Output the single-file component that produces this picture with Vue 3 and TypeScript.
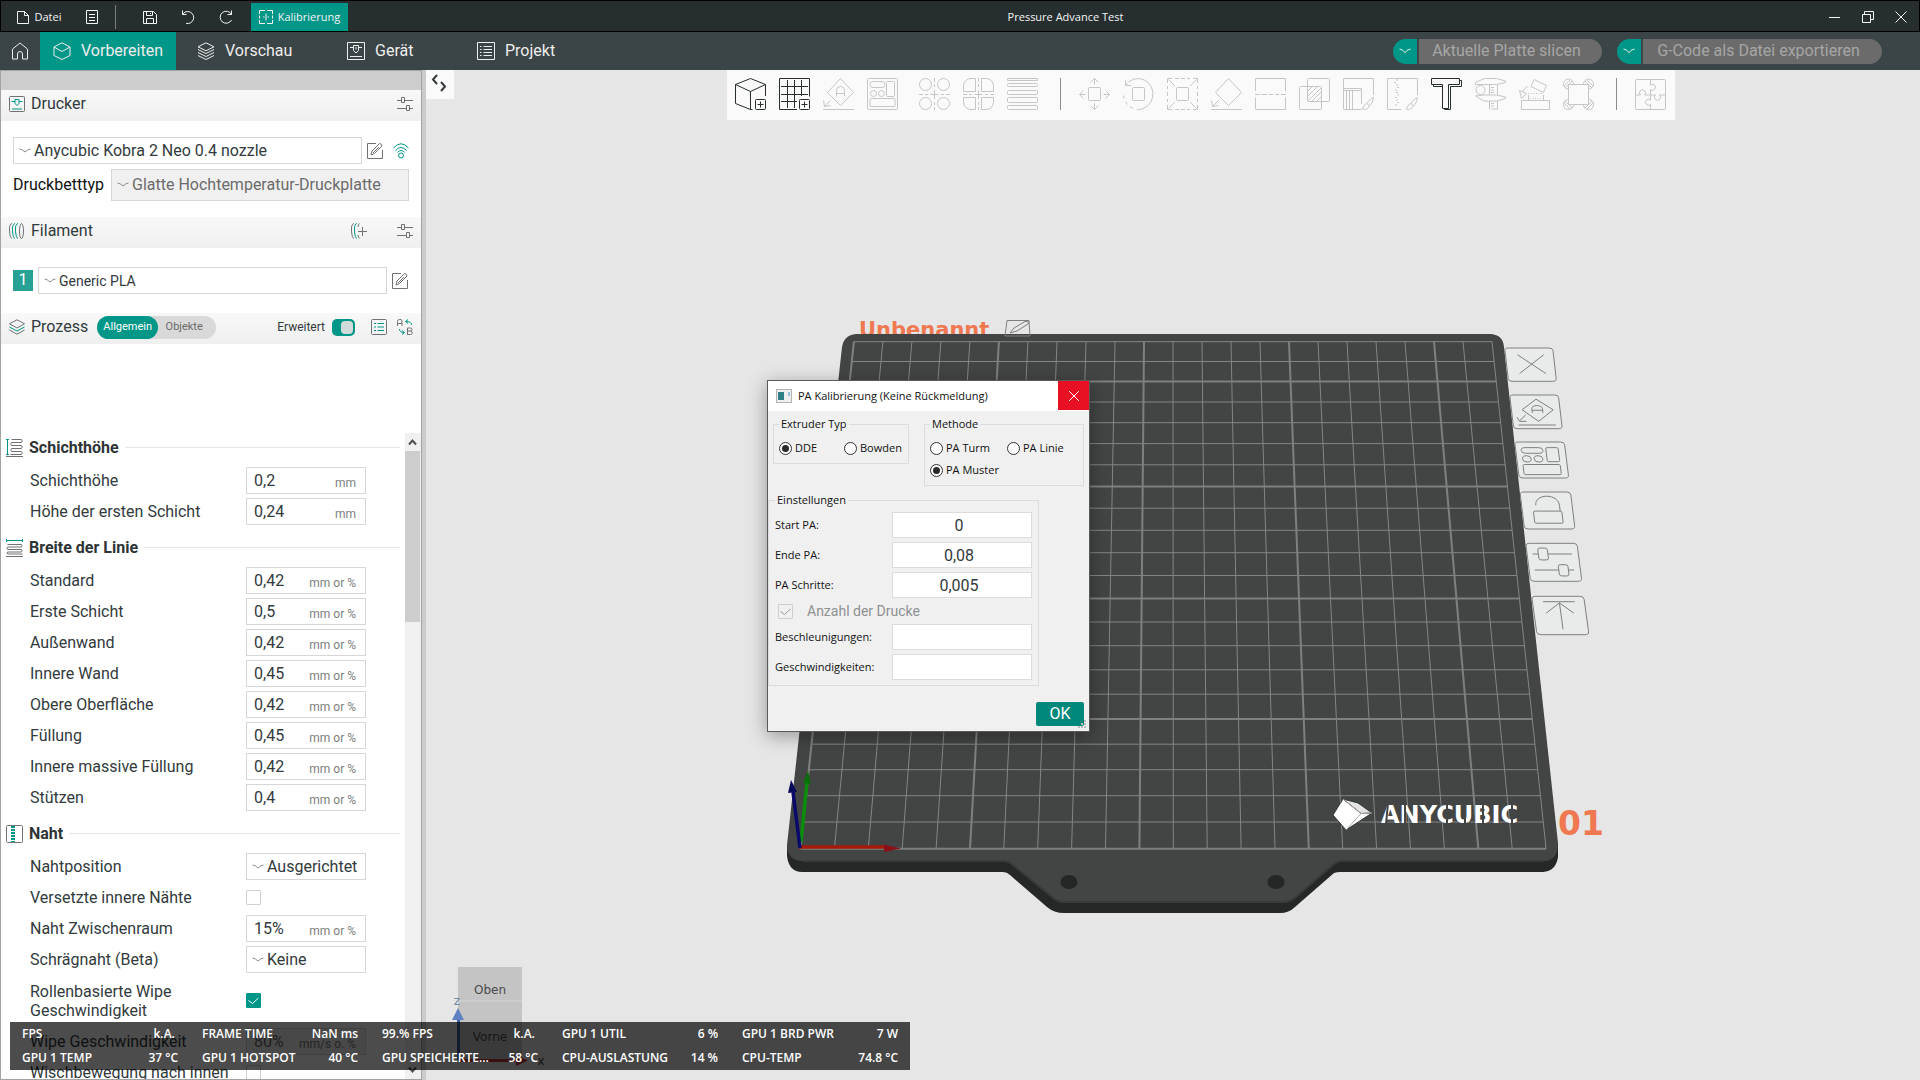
<script setup lang="ts">
import { ref } from 'vue'

interface ToolIcon {
  label: string
  d: string
  active?: boolean
}
interface Setting {
  id: string
  label: string
  kind: 'number' | 'select' | 'check'
  value?: string
  unit?: string
  checked?: boolean
  tall?: boolean
  disabled?: boolean
}
interface Section {
  title: string
  icon: 'height' | 'width' | 'seam'
  rows: Setting[]
}

const rect = (x: number, y: number, w: number, h: number, r = 0): string =>
  `M${x + r} ${y}h${w - 2 * r}a${r} ${r} 0 0 1 ${r} ${r}v${h - 2 * r}a${r} ${r} 0 0 1 ${-r} ${r}h${2 * r - w}a${r} ${r} 0 0 1 ${-r} ${-r}v${2 * r - h}a${r} ${r} 0 0 1 ${r} ${-r}z`
const circle = (cx: number, cy: number, r: number): string =>
  `M${cx - r} ${cy}a${r} ${r} 0 1 1 ${2 * r} 0a${r} ${r} 0 1 1 ${-2 * r} 0z`

const plusBox = rect(20.5, 21.5, 10, 10, 1) + 'M25.5 23.5v6M22.5 26.5h6'
const diamond = 'M17.5 .5L30.5 14.5L17.5 27.5L4.5 14.5ZM0 31.5H31M7.5 22.5L1.5 28.5M.5 22.5L1.5 28.5L7.5 27.5'
const letterMark = 'M13.5 18.5V12.5a4 4 0 0 1 8 0v6M13.5 15.5h8'
const brush = 'M30.5 19.5c-3 1-5 3.500-6.500 6l2.500 2.500c2-2 3.500-5 4-8.500zM24 25.500c-2.500 0-3 3.500-5 5.500 3.500 1 7 0 7-3.500'
const arrangeMark =
  rect(3, 3.5, 15, 6, 3) + rect(19.5, 3.5, 8, 15, 1) + circle(6.5, 15.5, 3) + circle(14.5, 15.5, 3) + rect(3, 20.5, 25, 8, 1)
const dashCross = 'M15.5 0v4M15.5 6v3M15.5 12v9M15.5 24v3M15.5 29v3M0 16.5h4M6 16.5h3M11.5 16.5h8M22 16.5h3M27 16.5h4'

const toolGroups: ToolIcon[][] = [
  [
    {
      label: 'Objekt hinzufügen',
      active: true,
      d: 'M15.5 .5L.5 6.5L15.5 13.5L30.5 6.5ZM.5 6.5V25.5L15.500 31.5V13.5M30.5 6.5V18M15.5 31.5h2' + plusBox,
    },
    {
      label: 'Platte hinzufügen',
      active: true,
      d: 'M30.5 18.5V.5H.5V31.5H18M8.5 2v28M15.5 2v28M22.5 2v16M2 8.500h27M2 16.5h27M2 23.500h16' + plusBox,
    },
    { label: 'Automatisch ausrichten', d: diamond + letterMark },
    { label: 'Anordnen', d: rect(0.5, 0.5, 30, 31, 1) + arrangeMark },
  ],
  [
    {
      label: 'In Objekte teilen',
      d: circle(6.5, 6.5, 6) + circle(24.5, 6.5, 6) + circle(6.5, 25.5, 6) + circle(24.5, 25.5, 6) + dashCross,
    },
    {
      label: 'In Teile trennen',
      d:
        'M12.5 13.500V.5H8A7.500 7.500 0 0 0 .5 8v5.500zM18.500 13.500V.5H23A7.500 7.500 0 0 1 30.5 8v5.500zM12.5 19.500V31.5H8A7.500 7.500 0 0 1 .5 24v-4.500zM18.500 19.500V31.5H23A7.500 7.500 0 0 0 30.5 24v-4.500z' +
        dashCross,
    },
    {
      label: 'Variable Schichthöhe',
      d: rect(0.5, 0.5, 30, 2) + rect(0.5, 5.5, 30, 3, 1) + rect(0.5, 12.5, 30, 4, 1) + rect(0.5, 19.5, 30, 5, 1) + rect(0.5, 27.5, 30, 4, 1),
    },
  ],
]

const gizmos: ToolIcon[] = [
  {
    label: 'Verschieben',
    d:
      rect(9.5, 9.5, 12, 13, 1) +
      'M15.500 6.5V.5M11.500 4.500L15.500 .5L19.500 4.500M6.5 16.5H.5M4.500 12.500L.5 16.5L4.500 20.500M24.500 16.5H30.5M26.500 12.500L30.5 16.5L26.500 20.500M15.500 25.500V31.5M11.500 27.500L15.500 31.5L19.500 27.500',
  },
  {
    label: 'Drehen',
    d:
      rect(9.5, 9.5, 12, 13, 1) +
      'M2.500 7.500A15 15.500 0 1 1 14 31.5M2.500 2.500V7.500H8M10 30.500L7 28.500M4.500 26.500L2.500 23.500M1 20.500L.5 17.500',
  },
  {
    label: 'Skalieren',
    d:
      rect(9.5, 9.5, 12, 13, 1) +
      'M.5 5V.5H5M8 .5h4M14 .5h4M20 .5h3M26 .5h4.500V5M.5 8v3M.5 14v4M.5 21v3M30.5 8v3M30.5 14v4M30.5 21v3M.5 27v4.500H5M8 31.5h4M14 31.5h4M20 31.5h3M26 31.5h4.500V27M1.500 1.500l6.500 6.500M29.500 1.500l-6.500 6.500M1.500 30.500l6.500-6.500M29.500 30.500l-6.500-6.500',
  },
  { label: 'Auf Fläche legen', d: diamond },
  { label: 'Schneiden', d: 'M.5 13V.5H30.5V13M.5 19.500V31.5H30.5V19.500M0 16.5h5M7 16.5h5M14 16.5h4M20 16.5h4M26 16.5h5' },
  {
    label: 'Boolesche Operation',
    d: rect(8.5, 0.5, 22, 23, 1) + rect(0.5, 8.5, 22, 23, 1) + 'M9 13l4-4M9 18l9-9M9 23l13-13M13 23l9-9M18 23l4-4',
  },
  {
    label: 'Stützen malen',
    d: 'M30.5 17V.5H.5V31.5H18M.5 10.500H18.500V26M.5 12.500H18M3.500 12.500V31M6.500 12.500V31M9.500 12.500V31' + brush,
  },
  {
    label: 'Naht malen',
    d:
      'M30.5 17V.5H.5V31.5H14M11 2h-2M9 4.500h-2M11 7h-2M12 9.500h-2M10 12h-2M11 14.500h-2M12 17h-2M10 19.500h-2M11 22h-2M12 24.500h-2M10 27h-2' +
      brush,
  },
  {
    label: 'Textform',
    active: true,
    d: 'M.5 .5H28.500V6.500H17.500V30.500H11.500V6.500H.5ZM28.500 2.500H30.5V8.500H19.500V31.500H13.500V30.500M2.500 6.500V8.500H11.500',
  },
  {
    label: 'Messen',
    d:
      'M.5 4.500L9.500 .5H21.500L30.5 3V4.500L21.500 6.500H.5ZM.5 18L9 17H21.500L30.5 19V20.500L21.500 23H9ZM14.500 6.500V17M22.500 6.500V17M14.500 23V31.500M22.500 23V31.500M16 9.500h3M16 12h3M16 14.500h3M16 25.500h3M16 28h3M16 31h6' +
      circle(5.5, 12, 4.5),
  },
  {
    label: 'SVG prägen',
    d:
      rect(2.5, 22.5, 28, 9) +
      'M15 1.500L27.500 7.500L24.500 14.500L12 8.500ZM8.500 8.500Q5 10 3.500 14M.5 12.500L7.500 15.500L2.500 20.500ZM9.500 15.500h1M12 15.500h1M14.500 15.500h1M17 15.500h1M19.500 15.500h1M22 15.500h1M9.500 17v5M24.500 17v5M11 20.500h1M13.500 20.500h1M16 20.500h1M18.500 20.500h1M21 20.500h1',
  },
  {
    label: 'Mausohren',
    d:
      rect(5.5, 6.5, 20, 20, 1) +
      'M5 11A5 5 0 1 1 10.500 6M20.500 6A5 5 0 1 1 26 11M5 21.500A5 5 0 1 0 10.500 27M20.500 27A5 5 0 1 0 26 21.500M1 8l6-6M2 10l7-7M30 8l-6-6M29 10l-7-7M1 25l6 6M2 23l7 7M30 25l-6 6M29 23l-7 7',
  },
]

const assembly: ToolIcon = {
  label: 'Montageansicht',
  d:
    rect(0.5, 1.5, 30, 30, 1) +
    'M15.500 1.500V7a3 3 0 1 1 0 4.500V22a3 3 0 1 0 0 4.500V31.5M.5 17H5.500a3 3 0 1 1 4 0H20.500a3 3 0 1 0 4 0H30.5',
}

const line = (id: string, label: string, value: string, unit = 'mm or %'): Setting => ({ id, label, kind: 'number', value, unit })

const sections = ref<Section[]>([
  {
    title: 'Schichthöhe',
    icon: 'height',
    rows: [line('layer', 'Schichthöhe', '0,2', 'mm'), line('first-layer', 'Höhe der ersten Schicht', '0,24', 'mm')],
  },
  {
    title: 'Breite der Linie',
    icon: 'width',
    rows: [
      line('w-default', 'Standard', '0,42'),
      line('w-first', 'Erste Schicht', '0,5'),
      line('w-outer', 'Außenwand', '0,42'),
      line('w-inner', 'Innere Wand', '0,45'),
      line('w-top', 'Obere Oberfläche', '0,42'),
      line('w-infill', 'Füllung', '0,45'),
      line('w-solid', 'Innere massive Füllung', '0,42'),
      line('w-support', 'Stützen', '0,4'),
    ],
  },
  {
    title: 'Naht',
    icon: 'seam',
    rows: [
      { id: 's-pos', label: 'Nahtposition', kind: 'select', value: 'Ausgerichtet' },
      { id: 's-stagger', label: 'Versetzte innere Nähte', kind: 'check', checked: false },
      line('s-gap', 'Naht Zwischenraum', '15%'),
      { id: 's-scarf', label: 'Schrägnaht (Beta)', kind: 'select', value: 'Keine' },
      { id: 's-role', label: 'Rollenbasierte Wipe Geschwindigkeit', kind: 'check', checked: true, tall: true },
      { id: 's-wipe', label: 'Wipe Geschwindigkeit', kind: 'number', value: '80%', unit: 'mm/s o. %', disabled: true },
      { id: 's-inward', label: 'Wischbewegung nach innen', kind: 'check', checked: false },
    ],
  },
])

/* Build plate: 22 x 22 cells of 10 mm seen in perspective */
const CELLS = 22
const depth = 0.00766
const project = (col: number, row: number): [number, number] => {
  const k = 1 + depth * row
  return [(800.5 + 8.97 * row + 33.89 * col) / k, (848.7 - 20.43 * row) / k]
}
const segment = (c1: number, r1: number, c2: number, r2: number): string => {
  const [x1, y1] = project(c1, r1)
  const [x2, y2] = project(c2, r2)
  return `M${x1.toFixed(1)} ${y1.toFixed(1)}L${x2.toFixed(1)} ${y2.toFixed(1)}`
}
let gridThin = ''
let gridBold = ''
for (let i = 0; i <= CELLS; i++) {
  const part = segment(i, 0, i, CELLS) + segment(0, i, CELLS, i)
  if (i % 5 === 0) gridBold += part
  else gridThin += part
}

const plateTools = [
  { label: 'Platte entfernen', m: [1504.7, 348, 48, 33.3, 3.8], d: 'M8 6.500L25.500 24.500M25.500 6.500L8 24.500' },
  { label: 'Platte ausrichten', m: [1509.7, 395, 48.6, 33.7, 4], d: 'M17 4L27.500 14L17 25L7 14ZM3.500 28.500H28M9 19L4.500 24.500M3 21L4.500 25L9 25M13.500 17V13a3.500 3 0 0 1 7 0v4M13.500 14.500h7' },
  { label: 'Platte anordnen', m: [1514.7, 442, 49.6, 36, 4.5], d: rect(3.5, 5, 14, 5, 2.5) + rect(19.5, 5, 8, 12.5, 1) + circle(6.5, 15, 2.8) + circle(14, 15, 2.8) + rect(3.5, 20, 24, 9, 1) },
  { label: 'Platte sperren', m: [1520, 492, 50.5, 37, 4.5], d: rect(7, 16.5, 18, 10.5, 1) + 'M9 11.500C9 1 24 1 24 11.500V16.500' },
  { label: 'Platteneinstellungen', m: [1525.7, 543.3, 51.3, 38, 4.9], d: 'M3.500 9H7M13 9H28' + rect(7, 4, 6, 10, 1.5) + 'M3.500 22.500H18.500M24.500 22.500H28' + rect(18.5, 18, 6, 9.5, 1.5) },
  { label: 'Nach vorn', m: [1531.7, 596.3, 52, 38.4, 5.3], d: 'M6.500 4.500H26M16.500 5.500V27.500M7.500 14L16.500 5.500L24.500 14' },
]
const matrix = (m: number[]): string => `matrix(${m[2] / 32} 0 ${m[4] / 32} ${m[3] / 32} ${m[0]} ${m[1]})`

const stats = [
  [['FPS', 'k.A. '], ['FRAME TIME', 'NaN ms'], ['99.% FPS', 'k.A. '], ['GPU 1 UTIL', '6 %'], ['GPU 1 BRD PWR', '7 W']],
  [['GPU 1 TEMP', '37 °C'], ['GPU 1 HOTSPOT', '40 °C'], ['GPU SPEICHERTE...', '58 °C'], ['CPU-AUSLASTUNG', '14 %'], ['CPU-TEMP', '74.8 °C']],
]

const extruder = ref('dde')
const method = ref('pattern')
const advanced = ref(true)
const startPa = ref('0')
const endPa = ref('0,08')
const stepPa = ref('0,005')
const accelerations = ref('')
const speeds = ref('')
</script>

<template>
  <div class="app">
    <header class="titlebar">
      <button class="tb file" type="button">
        <svg width="14" height="14" viewBox="0 0 14 14"><path d="M1.500 1.500h7l4 4v8h-11zM8.500 1.500v4h4" /></svg>
        Datei
      </button>
      <button class="tb menu" type="button" aria-label="Menü">
        <svg width="14" height="14" viewBox="0 0 14 14"><path d="M1.500 .5h11v13h-11zM4 4.500h6M4 7.500h6M4 10.500h6" /></svg>
      </button>
      <span class="tb-sep"></span>
      <button class="tb icon" type="button" aria-label="Speichern">
        <svg width="14" height="14" viewBox="0 0 14 14"><path d="M.5 1.500h10l3 3v9h-13zM3.500 1.500v4h6v-4M3.500 13.500v-5h7v5M7.500 3v1" /></svg>
      </button>
      <button class="tb icon" type="button" aria-label="Rückgängig">
        <svg width="14" height="14" viewBox="0 0 14 14"><path d="M1.500 .5v4h4M1.500 4.500A6 6 0 1 1 5 13.300" /></svg>
      </button>
      <button class="tb icon" type="button" aria-label="Wiederholen">
        <svg width="14" height="14" viewBox="0 0 14 14"><path d="M12.500 .5v4h-4M12.500 4.500A6 6 0 1 0 12.500 10" /></svg>
      </button>
      <button class="tb calib" type="button">
        <svg width="14" height="14" viewBox="0 0 14 14"><path d="M.5 4V.5H6M8 .5h5.500V4M.5 10v3.500H6M8 13.500h5.500V10M.5 5.500v3M13.500 5.500v3M4 7h1.500M8.500 7H10M7 3.500V10.500" /></svg>
        Kalibrierung
      </button>
      <h1 class="title">Pressure Advance Test</h1>
      <div class="win">
        <button type="button" aria-label="Minimieren"><svg width="12" height="12" viewBox="0 0 12 12"><path d="M0 6.500h11" /></svg></button>
        <button type="button" aria-label="Wiederherstellen"><svg width="12" height="12" viewBox="0 0 12 12"><path d="M.5 3.500h8v8h-8zM2.500 3V.5h9v8H9" /></svg></button>
        <button type="button" aria-label="Schließen"><svg width="12" height="12" viewBox="0 0 12 12"><path d="M.5 .5l11 11M11.500 .5l-11 11" /></svg></button>
      </div>
    </header>

    <nav class="tabs">
      <button class="home" type="button" aria-label="Startseite">
        <svg width="18" height="18" viewBox="0 0 18 18"><path d="M1.500 7L9 1l7.500 6v10h-5v-5a2.500 2.500 0 0 0-5 0v5h-5z" /></svg>
      </button>
      <button class="tab on" type="button">
        <svg width="18" height="18" viewBox="0 0 18 18"><path d="M9 .8l8 4.200v8.500L9 17.500 1 13.500V5zM1 5l8 4.500L17 5" /></svg>
        Vorbereiten
      </button>
      <button class="tab preview" type="button">
        <svg width="18" height="18" viewBox="0 0 18 18"><path d="M9 .8l8 4-8 4-8-4zM1 7.500l8 4 8-4M1 10.500l8 4 8-4M1 13.500l8 4 8-4" /></svg>
        Vorschau
      </button>
      <button class="tab device" type="button">
        <svg width="18" height="18" viewBox="0 0 18 18"><path d="M.5 .5h17v17H.5zM3 5.500h3.500M11.500 5.500H15M6.500 3.500h5v5L9 11 6.500 8.500zM9 5v2.500M3 14.500h12" /></svg>
        Gerät
      </button>
      <button class="tab" type="button">
        <svg width="18" height="18" viewBox="0 0 18 18"><path d="M.5 .5h17v17H.5zM3 4.500h1.500M3 7.500h1.500M3 10.500h1.500M3 13.500h1.500M6.500 4.500H15M6.500 7.500H15M6.500 10.500H15M6.500 13.500H15" /></svg>
        Projekt
      </button>
      <div class="actions">
        <div class="split">
          <button class="caret" type="button" aria-label="Slice-Optionen"><svg width="12" height="6" viewBox="0 0 12 6"><path d="M.5 1q2.500 0 5.500 3.500Q9 1 11.500 1" /></svg></button>
          <button class="go" type="button" disabled>Aktuelle Platte slicen</button>
        </div>
        <div class="split wide">
          <button class="caret" type="button" aria-label="Export-Optionen"><svg width="12" height="6" viewBox="0 0 12 6"><path d="M.5 1q2.500 0 5.500 3.500Q9 1 11.500 1" /></svg></button>
          <button class="go" type="button" disabled>G-Code als Datei exportieren</button>
        </div>
      </div>
    </nav>

    <div class="work">
      <aside class="side">
        <div class="band"></div>
        <section>
          <h2 class="head">
            <svg class="hi" width="16" height="16" viewBox="0 0 16 16"><rect x=".5" y=".5" width="15" height="15" rx="1" /><path class="t" d="M2.500 5.500H6M10 5.500h3.500M6 3.500h4v4L8 9.500 6 7.500zM3 13h10" /></svg>
            Drucker
            <button class="ib push" type="button" aria-label="Druckereinstellungen">
              <svg width="16" height="16" viewBox="0 0 16 16"><path d="M0 4.500h4M7 4.500h9M4.500 1.500h3v5h-3zM0 12.500h9.500M13 12.500h3M9.500 9.500h3v5h-3z" /></svg>
            </button>
          </h2>
          <div class="row printer">
            <div class="sel">
              <svg class="chev" width="12" height="6" viewBox="0 0 12 6"><path d="M.5 1q2.500 0 5.500 3Q9 1 11.500 1" /></svg>
              <select aria-label="Drucker"><option>Anycubic Kobra 2 Neo 0.4 nozzle</option></select>
            </div>
            <button class="ib" type="button" aria-label="Drucker bearbeiten">
              <svg width="16" height="16" viewBox="0 0 16 16"><path d="M9 .5H.5v15h15V7M4 12l1-4 7.500-7.500q2 0 2.500 2.500L7.500 10.500zM6 10l6-6" /></svg>
            </button>
            <button class="ib wifi" type="button" aria-label="Netzwerk">
              <svg width="16" height="16" viewBox="0 0 16 16"><path class="t" d="M.5 5Q8-3.500 15.500 5M2.500 7.500Q8 1.500 13.500 7.500M4.500 9.500Q8 5.500 11.500 9.500" /><circle class="t" cx="8" cy="12.500" r="2.500" /></svg>
            </button>
          </div>
          <div class="row bed">
            <label for="bed">Druckbetttyp</label>
            <div class="sel off">
              <svg class="chev" width="12" height="6" viewBox="0 0 12 6"><path d="M.5 1q2.500 0 5.500 3Q9 1 11.500 1" /></svg>
              <select id="bed" disabled><option>Glatte Hochtemperatur-Druckplatte</option></select>
            </div>
          </div>
        </section>
        <section>
          <h2 class="head">
            <svg class="hi" width="16" height="16" viewBox="0 0 16 16"><path d="M3 .5Q0 1 .5 8T3 15.500" /><path class="t" d="M6 .5Q3 1 3.500 8T6 15.500M9 .5Q6 1 6.500 8T9 15.500" /><ellipse cx="12.500" cy="8" rx="2" ry="7.500" /></svg>
            Filament
            <button class="ib push" type="button" aria-label="Filament hinzufügen">
              <svg width="16" height="16" viewBox="0 0 16 16"><path d="M3 .5Q0 1 .5 8T3 15.500M8.500 .5Q7.500 1 7 4M7 12Q7.500 15 8.500 15.500M7 8.500h9M11.500 4v9" /><path class="t" d="M6 .5Q3 1 3.500 8T6 15.500" /></svg>
            </button>
            <button class="ib far" type="button" aria-label="Filamenteinstellungen">
              <svg width="16" height="16" viewBox="0 0 16 16"><path d="M0 4.500h4M7 4.500h9M4.500 1.500h3v5h-3zM0 12.500h9.500M13 12.500h3M9.500 9.500h3v5h-3z" /></svg>
            </button>
          </h2>
          <div class="row filament">
            <span class="slot">1</span>
            <div class="sel small">
              <svg class="chev" width="12" height="6" viewBox="0 0 12 6"><path d="M.5 1q2.500 0 5.500 3Q9 1 11.500 1" /></svg>
              <select aria-label="Filament"><option>Generic PLA</option></select>
            </div>
            <button class="ib" type="button" aria-label="Filament bearbeiten">
              <svg width="16" height="16" viewBox="0 0 16 16"><path d="M9 .5H.5v15h15V7M4 12l1-4 7.500-7.500q2 0 2.500 2.500L7.500 10.500zM6 10l6-6" /></svg>
            </button>
          </div>
        </section>
        <section class="process">
          <h2 class="head">
            <svg class="hi" width="16" height="16" viewBox="0 0 16 16"><path d="M8 .8l7.500 4L8 9 .5 4.800zM.5 11l7.500 4.200 7.500-4.200" /><path class="t" d="M.5 8L8 12l7.500-4" /></svg>
            Prozess
            <span class="pill"><button class="act" type="button">Allgemein</button><button type="button">Objekte</button></span>
            <label class="adv" for="adv">Erweitert</label>
            <input id="adv" v-model="advanced" class="toggle" type="checkbox" role="switch" />
            <button class="ib gap" type="button" aria-label="Profile">
              <svg width="16" height="16" viewBox="0 0 16 16"><rect x=".5" y=".5" width="15" height="15" rx="1" /><path class="t" d="M3 4.500h2M3 8h2M3 11.500h2M6.500 4.500H13M6.500 8H13M6.500 11.500H13" /></svg>
            </button>
            <button class="ib gap2" type="button" aria-label="Vergleichen">
              <svg width="16" height="16" viewBox="0 0 16 16"><path d="M.5 7V2.500a2 2 0 0 1 4.500 0V7M.5 4.500H5M10.500 9v6.500h3a1.500 1.500 0 0 0 0-3.500 1.500 1.500 0 0 0 0-3zM10.500 12h3" /><path class="t" d="M14.500 6q0-3.500-5.500-3.500M11 .5l-2.500 2L11 4.500M2.500 10q0 3.500 4.500 3.500M5 11.500l2.500 2-2.500 2" /></svg>
            </button>
          </h2>
        </section>
        <div class="scroll">
          <div class="list">
            <section v-for="s in sections" :key="s.title">
              <h3 class="sec">
                <svg width="17" height="18" viewBox="0 0 17 18">
                  <template v-if="s.icon === 'height'">
                    <path class="t" d="M0 .5h3M1.500 .5v15M0 15.500h3" /><path d="M5.500 .5h10q1.500 1.500 0 3h-10q-1.500 1.500 0 3h10q1.500 1.500 0 3h-10q-1.500 1.500 0 3h10q1.500 1.500 0 3h-11M0 17.500h17" />
                  </template>
                  <template v-else-if="s.icon === 'width'">
                    <path class="t" d="M.5 0v3M.5 1.500h16M16.500 0v3" /><path d="M1.500 5.500h14q1 1.250 0 2.500h-14q-1 1.250 0 2.500h14q1 1.250 0 2.500h-14q-1 1 0 2h15M0 17.500h17" />
                  </template>
                  <template v-else>
                    <rect x=".5" y=".5" width="16" height="17" rx="1" /><path class="seam" d="M7 1v16" />
                  </template>
                </svg>
                {{ s.title }}
                <span class="rule"></span>
              </h3>
              <div v-for="r in s.rows" :key="r.id" class="set" :class="{ tall: r.tall, dim: r.disabled }">
                <label :for="r.id">{{ r.label }}</label>
                <div v-if="r.kind === 'number'" class="num">
                  <input :id="r.id" v-model="r.value" type="text" :disabled="r.disabled" /><span>{{ r.unit }}</span>
                </div>
                <div v-else-if="r.kind === 'select'" class="sel opt">
                  <svg class="chev" width="12" height="6" viewBox="0 0 12 6"><path d="M.5 1q2.500 0 5.500 3Q9 1 11.500 1" /></svg>
                  <select :id="r.id"><option>{{ r.value }}</option></select>
                </div>
                <span v-else class="box">
                  <input :id="r.id" v-model="r.checked" type="checkbox" />
                  <svg v-if="r.checked" width="15" height="15" viewBox="0 0 15 15"><path d="M2.500 7.500l4 3 6-5.500" /></svg>
                </span>
              </div>
            </section>
          </div>
          <div class="bar">
            <svg width="15" height="18" viewBox="0 0 15 18"><path d="M4 11.500l3.500-4 3.500 4" /></svg>
            <div class="track"><div class="thumb"></div></div>
            <svg width="15" height="18" viewBox="0 0 15 18"><path d="M4 6.500l3.500 4 3.500-4" /></svg>
          </div>
        </div>
      </aside>

      <main class="view">
        <svg class="scene" viewBox="426 70 1494 1010" preserveAspectRatio="xMinYMin meet" role="img" aria-label="Druckplatte">
          <text class="orange" x="859" y="337" font-size="21">Unbenannt</text>
          <path class="side3d" d="M787 845V856Q789 872 802 872H1003Q1007 872 1010 875L1047 907Q1054 913 1064 913H1280Q1289 913 1295 907L1334 873Q1337 872 1340 872H1543Q1556 871 1558 857V843Z" />
          <path class="top3d" d="M856 334H1491Q1503 335 1504 347L1558 843Q1558 861 1543 861H1342Q1337 861 1334 864L1297 896Q1291 902 1284 902H1064Q1057 902 1051 896L1013 865Q1008 861 1004 861H802Q787 860 787 845L842 347Q844 335 856 334Z" />
          <path class="edge3d" d="M802 861H1004Q1008 861 1013 865L1051 896Q1057 902 1064 902H1284Q1291 902 1297 896L1334 864Q1337 861 1342 861H1543" />
          <ellipse cx="1069" cy="882" rx="8.500" ry="7" class="hole" />
          <ellipse cx="1276" cy="882" rx="8.500" ry="7" class="hole" />
          <path :d="gridThin" class="thin" />
          <path :d="gridBold" class="bold" />
          <path d="M1343 799L1333 815L1346 830L1372 813L1358 803Z" fill="#fff" />
          <path d="M1343 799L1361 813.500L1372 813L1358 803Z" fill="#e4e4e4" />
          <path d="M1343 799L1361 813.500L1346 830M1361 813.500L1372 813" stroke="#a8a8a8" fill="none" />
          <text class="brand" x="1381" y="823" font-size="24">ANYCUBIC</text>
          <path class="cuts" d="M1388 803L1386 824M1405 803V824M1447 803V824M1465 803V824M1483 803V824M1512 803V824" />
          <text class="orange" x="1558" y="835" font-size="33">01</text>
          <g class="axes">
            <path d="M799 847H885" stroke="#a51b08" stroke-width="3.500" /><path d="M884 844.500L901 848.500L884 852Z" fill="#8a1018" />
            <path d="M801 842L807 782" stroke="#0c8c0c" stroke-width="3.500" /><path d="M803 783L808 771L811 784Z" fill="#0a6e0a" />
            <path d="M800 848L793 792" stroke="#0a0a6a" stroke-width="3.500" /><path d="M788 793L791 780L797 792Z" fill="#0a0a5a" />
          </g>
          <g class="ptool">
            <path d="M1007 320.500H1029L1030 336H1005ZM1010 333L1014 328L1025 321.500Q1030 321 1028 324L1017 331Z" />
            <g v-for="p in plateTools" :key="p.label" role="button" :aria-label="p.label" :transform="matrix(p.m)">
              <rect x="0" y="0" width="32" height="32" rx="2.500" /><path :d="p.d" />
            </g>
          </g>
          <g class="cube">
            <path d="M458 967H522V1061H458Z" fill="#c4c4c4" />
            <path d="M458 1001H522" stroke="#d6d6d6" />
            <text x="490" y="994" text-anchor="middle">Oben</text>
            <text x="490" y="1041" text-anchor="middle">Vorne</text>
            <path d="M458.500 1018V1060" stroke="#3f62a8" stroke-width="3" /><path d="M452 1020L458 1008L464 1020Z" fill="#5f82c4" />
            <path d="M459 1060.500H520" stroke="#c23b3b" stroke-width="3" /><path d="M516 1055L528 1060.500L516 1066Z" fill="#c23b3b" />
            <text x="457" y="1005" text-anchor="middle" class="z">z</text>
            <text x="541" y="1065" text-anchor="middle">x</text>
          </g>
        </svg>
        <button class="fold" type="button" aria-label="Seitenleiste einklappen">
          <svg width="16" height="18" viewBox="0 0 16 18"><path d="M6 1L2 5.500 6 10M10 8l4 4.500L10 17" /></svg>
        </button>
        <div class="tools" role="toolbar" aria-label="Werkzeuge">
          <template v-for="(g, i) in toolGroups" :key="i">
            <button v-for="(t, j) in g" :key="t.label" type="button" :aria-label="t.label" :class="{ live: t.active, split2: i > 0 && j === 0 }">
              <svg width="32" height="32" viewBox="0 0 32 32"><path :d="t.d" /></svg>
            </button>
          </template>
          <span class="vsep"></span>
          <button v-for="t in gizmos" :key="t.label" type="button" :aria-label="t.label" :class="{ live: t.active }">
            <svg width="32" height="32" viewBox="0 0 32 32"><path :d="t.d" /></svg>
          </button>
          <span class="vsep"></span>
          <button type="button" :aria-label="assembly.label"><svg width="32" height="32" viewBox="0 0 32 32"><path :d="assembly.d" /></svg></button>
        </div>
      </main>
    </div>

    <form class="dialog" role="dialog" aria-labelledby="dlg" @submit.prevent>
      <header>
        <svg width="16" height="14" viewBox="0 0 16 14" stroke-width="0"><rect width="16" height="14" fill="#b4b4b4" /><rect x="1" y="1" width="14" height="12" fill="#eee" /><rect x="2" y="3" width="6" height="8" fill="#2f7f86" /><rect x="12" y="3" width="2" height="4" fill="#9ac0dc" /></svg>
        <h2 id="dlg">PA Kalibrierung (Keine Rückmeldung)</h2>
        <button class="x" type="button" aria-label="Dialog schließen"><svg width="12" height="12" viewBox="0 0 12 12"><path d="M1 1l10 10M11 1L1 11" /></svg></button>
      </header>
      <div class="groups">
        <fieldset class="ext">
          <legend>Extruder Typ</legend>
          <label class="first"><input v-model="extruder" type="radio" name="ext" value="dde" />DDE</label>
          <label><input v-model="extruder" type="radio" name="ext" value="bowden" />Bowden</label>
        </fieldset>
        <fieldset class="met">
          <legend>Methode</legend>
          <label class="first"><input v-model="method" type="radio" name="met" value="tower" />PA Turm</label>
          <label><input v-model="method" type="radio" name="met" value="line" />PA Linie</label>
          <label><input v-model="method" type="radio" name="met" value="pattern" />PA Muster</label>
        </fieldset>
      </div>
      <fieldset class="cfg">
        <legend>Einstellungen</legend>
        <div class="f"><label for="pa0">Start PA:</label><input id="pa0" v-model="startPa" type="text" /></div>
        <div class="f"><label for="pa1">Ende PA:</label><input id="pa1" v-model="endPa" type="text" /></div>
        <div class="f"><label for="pas">PA Schritte:</label><input id="pas" v-model="stepPa" type="text" /></div>
        <label class="cnt">
          <span class="box"><input type="checkbox" checked disabled /><svg width="15" height="15" viewBox="0 0 15 15"><path d="M2.500 7.500l4 3 6-5.500" /></svg></span>
          Anzahl der Drucke
        </label>
        <div class="f"><label for="acc">Beschleunigungen:</label><input id="acc" v-model="accelerations" type="text" /></div>
        <div class="f"><label for="spd">Geschwindigkeiten:</label><input id="spd" v-model="speeds" type="text" /></div>
      </fieldset>
      <footer><button type="submit">OK</button></footer>
      <svg class="grip" width="9" height="9" viewBox="0 0 9 9"><path d="M6 0h2v2H6zM3 3h2v2H3zM6 3h2v2H6zM0 6h2v2H0zM3 6h2v2H3zM6 6h2v2H6z" /></svg>
    </form>

    <div class="osd">
      <div v-for="(r, i) in stats" :key="i" class="osd-row">
        <div v-for="c in r" :key="c[0]" class="cell"><span>{{ c[0] }}</span><span>{{ c[1] }}</span></div>
      </div>
    </div>
  </div>
</template>

<style>
html,
body {
  margin: 0;
  height: 100%;
  overflow: hidden;
}
</style>

<style scoped>
.app {
  position: relative;
  display: flex;
  flex-direction: column;
  height: 100vh;
  font: 16px/20px Roboto, "Noto Sans", sans-serif;
  color: #323a3d;
  background: #e6e6e6;
  overflow: hidden;
}
*,
*::before {
  box-sizing: border-box;
}
button,
input,
select {
  font: inherit;
  color: inherit;
  margin: 0;
  padding: 0;
  border: 0;
  background: none;
  border-radius: 0;
}
h1,
h2,
h3 {
  margin: 0;
  font: inherit;
}
svg {
  display: block;
  flex: none;
  fill: none;
  stroke: currentColor;
}

/* title bar */
.titlebar {
  display: flex;
  align-items: center;
  height: 32px;
  flex: none;
  padding: 1px 2px 0 1px;
  border: 1px solid #000;
  background: #262e30;
  color: #f4f4f4;
  font: 11px/16px "Open Sans", "Noto Sans", sans-serif;
}
.tb {
  display: flex;
  align-items: center;
  justify-content: center;
  height: 28px;
  gap: 5px;
}
.file { width: 73px; }
.menu { width: 34px; }
.tb-sep {
  width: 1px;
  height: 24px;
  margin: 0 15px 0 6px;
  background: #7d7d7d;
}
.icon { width: 38px; }
.calib {
  width: 97px;
  margin-left: 6px;
  background: #009688;
}
.title {
  flex: 1;
  text-align: center;
}
.win {
  display: flex;
  justify-content: flex-end;
  width: 134px;
}
.win button {
  display: flex;
  justify-content: center;
  align-items: center;
  width: 33px;
  height: 28px;
}

/* main tabs */
.tabs {
  display: flex;
  height: 38px;
  flex: none;
  background: #3b4446;
  color: #eee;
}
.home {
  width: 40px;
  display: flex;
  align-items: center;
  justify-content: center;
}
.tab {
  display: flex;
  align-items: center;
  gap: 10px;
  padding: 0 21px;
}
.tab.on {
  width: 136px;
  padding: 0 13px;
  background: #009688;
}
.preview { width: 150px; }
.device { width: 130px; }
.actions {
  display: flex;
  align-items: center;
  gap: 15px;
  margin-left: auto;
  padding-right: 38px;
}
.split {
  display: flex;
  gap: 2px;
  height: 25px;
}
.caret {
  display: flex;
  align-items: center;
  justify-content: center;
  width: 24px;
  border-radius: 13px 0 0 13px;
  background: #009688;
}
.go {
  width: 183px;
  padding-right: 8px;
  border-radius: 0 13px 13px 0;
  background: #6b6b6b;
  color: #a6a6a6;
}
.wide .go { width: 239px; }

.work {
  flex: 1;
  display: flex;
  min-height: 0;
}

/* sidebar */
.side {
  display: flex;
  flex-direction: column;
  width: 422px;
  flex: none;
  border: 1px solid #a3a3a3;
  background: #fff;
}
.band {
  height: 19px;
  flex: none;
  background: #cdcdcd;
}
.head {
  display: flex;
  align-items: center;
  height: 31px;
  padding: 0 8px 3px;
  background: linear-gradient(#f8f8f8, #efefef);
}
.hi { margin-right: 6px; }
.hi,
.ib { color: #6f7274; }
.t { stroke: #009688; }
.push { margin-left: auto; }
.far { margin-left: 30px; }
.row {
  display: flex;
  align-items: center;
}
.printer {
  gap: 5px;
  padding: 16px 12px 5px;
}
.wifi { margin-left: 5px; }
.bed {
  gap: 8px;
  padding: 0 12px 16px;
  color: #111;
}
.bed label { flex: none; width: 90px; }
.sel {
  flex: 1;
  display: flex;
  align-items: center;
  height: 27px;
  padding-left: 5px;
  border: 1px solid #d6d6d6;
  background: #fff;
}
.sel select {
  flex: 1;
  min-width: 0;
  height: 100%;
  padding-left: 3px;
  appearance: none;
  opacity: 1;
}
.chev { color: #8b8b8b; }
.off {
  height: 32px;
  background: #f0f0f0;
  color: #6b6b6b;
}
.small { font-size: 14px; }
.filament {
  gap: 5px;
  padding: 19px 13px 19px 12px;
}
.slot {
  width: 20px;
  height: 21px;
  text-align: center;
  background: #27a294;
  color: #fff;
}
.pill {
  display: flex;
  height: 23px;
  margin-left: 9px;
  border-radius: 12px;
  background: #d9d9d9;
  font-size: 11px;
}
.pill button {
  width: 58px;
  padding-right: 6px;
  color: #6b6b6b;
}
.pill .act {
  width: 61px;
  padding: 0;
  border-radius: 12px;
  background: #009688;
  color: #fff;
}
.adv {
  margin-left: auto;
  font-size: 12px;
}
.toggle {
  appearance: none;
  width: 23px;
  height: 17px;
  margin-left: 7px;
  border-radius: 5px;
  background: #009688;
  display: flex;
  align-items: center;
  justify-content: flex-end;
  padding-right: 2px;
}
.toggle::before {
  content: "";
  width: 12px;
  height: 13px;
  border-radius: 4px;
  background: #d2dcda;
}
.gap { margin-left: 16px; }
.gap2 { margin-left: 10px; }

.scroll {
  flex: 1;
  display: flex;
  min-height: 0;
  padding-top: 83px;
}
.list {
  flex: 1;
  overflow: hidden;
}
.sec {
  display: flex;
  align-items: center;
  height: 38px;
  padding: 3px 5px 0;
  gap: 6px;
  font-weight: 700;
  color: #2e3436;
}
.sec svg { color: #6f7274; }
.sec .seam {
  stroke: #009688;
  stroke-width: 4;
  stroke-dasharray: 2 1;
}
.rule {
  flex: 1;
  height: 1px;
  background: #e6e6e6;
}
.set {
  display: flex;
  align-items: center;
  height: 31px;
  padding-left: 29px;
}
.set > label {
  width: 216px;
  padding-right: 16px;
}
.tall {
  height: 51px;
  line-height: 19px;
}
.tall > label { padding-right: 50px; }
.num {
  display: flex;
  align-items: center;
  width: 120px;
  height: 27px;
  padding: 0 9px 0 7px;
  border: 1px solid #d6d6d6;
  background: #fff;
}
.num input {
  flex: 1;
  min-width: 0;
  width: 30px;
  height: 100%;
}
.num span {
  padding-top: 4px;
  font-size: 12px;
  line-height: 16px;
  color: #7c7f7e;
}
.opt {
  flex: none;
  width: 120px;
}
.dim .num { background: #f0f0f0; }
.dim input { color: #6b6b6b; }
.box {
  display: grid;
  width: 15px;
  height: 15px;
}
.box > * { grid-area: 1 / 1; }
.box input {
  appearance: none;
  width: 15px;
  height: 15px;
  border: 1px solid #cfcfcf;
  border-radius: 1px;
}
.set .box input:checked {
  border-color: #009688;
  background: #009688;
}
.box svg {
  color: #fff;
  pointer-events: none;
}
.bar {
  display: flex;
  flex-direction: column;
  width: 16px;
  margin-top: 6px;
  background: #f0f0f0;
  color: #505050;
}
.bar svg { stroke-width: 2; }
.track { flex: 1; }
.thumb {
  height: 28%;
  width: 15px;
  background: #cdcdcd;
}

/* viewport */
.view {
  position: relative;
  flex: 1;
  min-width: 0;
  border-left: 4px solid #cbcbcb;
}
.scene {
  width: 100%;
  height: 100%;
}
.scene text {
  stroke: none;
  font-family: "DejaVu Sans", sans-serif;
}
.scene .orange {
  fill: #f07850;
  font-weight: 700;
}
.scene .brand {
  fill: #fff;
  font-weight: 700;
}
.cuts { stroke: #434544; stroke-width: 2; }
.side3d { fill: #262828; stroke: none; }
.top3d { fill: #434544; stroke: none; }
.edge3d { stroke: #383b3a; stroke-width: 2; }
.hole { fill: #252726; stroke: none; }
.thin { stroke: #848685; }
.bold { stroke: #7e807f; stroke-width: 2; }
.axes path[fill] { stroke: none; }
.ptool {
  stroke: #7e8080;
}
.ptool path,
.ptool rect { vector-effect: non-scaling-stroke; }
.ptool rect { fill: #e9ebea; }
.cube text {
  fill: #4a4a4a;
  font-size: 12px;
}
.cube path:not([stroke]) { stroke: none; }
.cube .z { fill: #6f87a8; }
.fold {
  position: absolute;
  left: 0;
  top: 0;
  width: 28px;
  height: 29px;
  padding: 4px 0 0 5px;
  background: #fafafa;
  display: flex;
}
.fold svg { stroke-width: 2; }
.tools {
  position: absolute;
  left: 301px;
  top: 0;
  display: flex;
  gap: 12px;
  height: 50px;
  padding: 8px;
  background: #fafafa;
}
.tools button {
  display: flex;
  color: #c6c6c6;
}
.tools .live { color: #262e30; }
.tools .split2 { margin-left: 8px; }
.vsep {
  width: 1px;
  height: 32px;
  margin: 0 6px 0 9px;
  background: #8c8c8c;
}

/* calibration dialog */
.dialog {
  position: absolute;
  left: 767px;
  top: 380px;
  width: 323px;
  border: 1px solid #5a5a5a;
  background: #f0f0f0;
  box-shadow: 0 4px 18px rgba(0, 0, 0, 0.35);
  font: 11px/16px "Open Sans", "Noto Sans", sans-serif;
  color: #111;
}
.dialog header {
  display: flex;
  align-items: center;
  height: 30px;
  padding-left: 8px;
  gap: 6px;
  background: #fff;
}
.dialog .x {
  display: flex;
  align-items: center;
  justify-content: center;
  align-self: flex-start;
  width: 31px;
  height: 29px;
  margin-left: auto;
  background: #e81123;
  color: #fff;
}
.groups {
  display: flex;
  align-items: flex-start;
  justify-content: space-between;
  padding: 5px 5px 0;
}
fieldset {
  margin: 0;
  min-width: 0;
  border: 1px solid #dcdcdc;
}
legend {
  padding: 0 2px;
}
.ext,
.met {
  display: flex;
  padding: 5px 4px 4px 5px;
}
.ext { width: 136px; }
.met {
  flex-wrap: wrap;
  width: 160px;
}
.ext label,
.met label {
  display: flex;
  align-items: center;
  gap: 3px;
  height: 22px;
  white-space: nowrap;
}
.ext .first { width: 65px; }
.met .first { width: 77px; }
input[type="radio"] {
  appearance: none;
  display: grid;
  place-items: center;
  width: 13px;
  height: 13px;
  border: 1px solid #333;
  border-radius: 50%;
  background: #fff;
}
input[type="radio"]:checked::before {
  content: "";
  width: 7px;
  height: 7px;
  border-radius: 50%;
  background: #2a2a2a;
}
.cfg {
  width: 271px;
  margin-top: 6px;
  padding: 2px 5px 3px 6px;
}
.f {
  display: flex;
  align-items: center;
  height: 30px;
}
.f label { width: 117px; }
.f input {
  width: 140px;
  height: 26px;
  padding-right: 6px;
  border: 1px solid #dcdcdc;
  background: #fff;
  text-align: center;
  font: 16px/20px Roboto, "Noto Sans", sans-serif;
  color: #323a3d;
}
.cnt {
  display: flex;
  align-items: center;
  gap: 14px;
  height: 22px;
  padding-left: 3px;
  font: 14px/20px Roboto, "Noto Sans", sans-serif;
  color: #8e9192;
}
.cnt svg { color: #999; }
.dialog footer {
  display: flex;
  justify-content: flex-end;
  padding: 16px 5px 5px;
}
.dialog footer button {
  width: 48px;
  height: 24px;
  border-radius: 2px;
  background: #00897b;
  color: #fff;
  font: 16px/20px Roboto, "Noto Sans", sans-serif;
}
.grip {
  position: absolute;
  right: 2px;
  bottom: 2px;
  fill: #bdbdbd;
  stroke: none;
}

/* performance overlay */
.osd {
  position: absolute;
  left: 10px;
  bottom: 10px;
  width: 900px;
  background: rgba(0, 0, 0, 0.7);
  color: #fff;
  font: 600 12px/24px "Open Sans", "Noto Sans", sans-serif;
}
.osd-row { display: flex; }
.cell {
  flex: 1;
  display: flex;
  justify-content: space-between;
  padding: 0 12px;
  white-space: pre;
}
</style>
